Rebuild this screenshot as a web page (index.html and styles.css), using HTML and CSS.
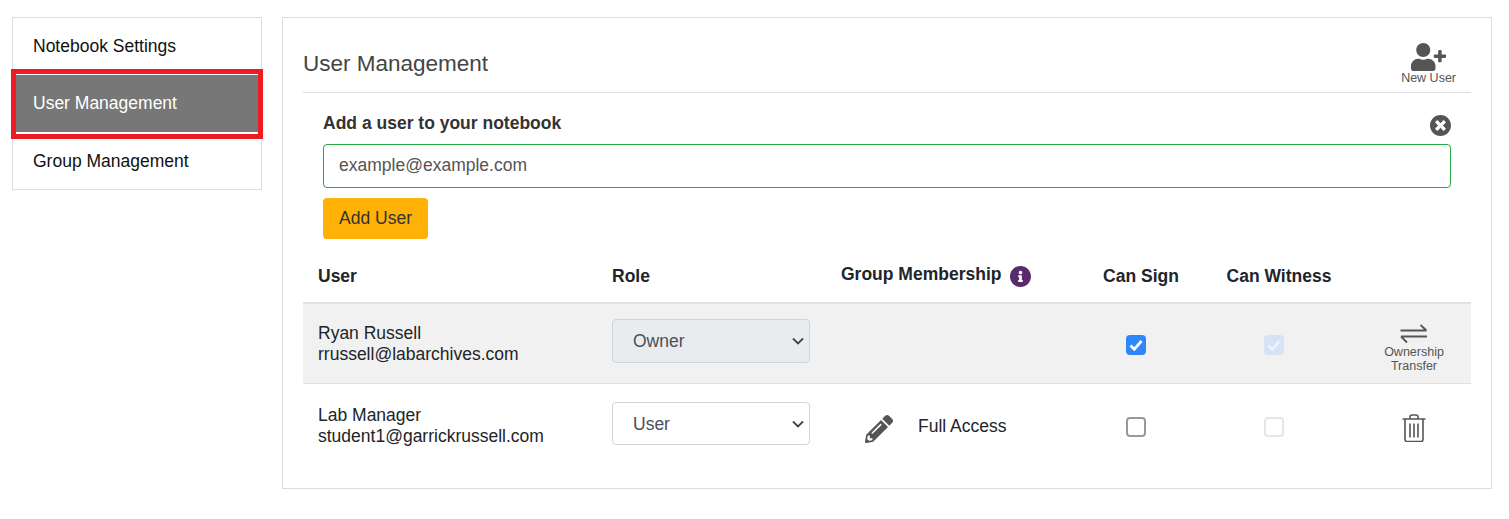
FILE: index.html
```html
<!DOCTYPE html>
<html lang="en">
<head>
<meta charset="utf-8">
<title>User Management</title>
<link rel="stylesheet" href="styles.css">
</head>
<body>
<div class="page">
  <nav class="side">
    <a class="side-item first">Notebook Settings</a>
    <a class="side-item active">User Management</a>
    <a class="side-item last">Group Management</a>
  </nav>
  <main class="main">
    <header class="head">
      <h1 class="title">User Management</h1>
      <div class="new-user">
        <svg class="new-user-icon" viewBox="0 0 640 512"><path d="M624 208h-64v-64c0-8.800-7.200-16-16-16h-32c-8.800 0-16 7.200-16 16v64h-64c-8.800 0-16 7.200-16 16v32c0 8.800 7.200 16 16 16h64v64c0 8.800 7.200 16 16 16h32c8.800 0 16-7.200 16-16v-64h64c8.800 0 16-7.200 16-16v-32c0-8.800-7.200-16-16-16zm-400 48c70.700 0 128-57.300 128-128S294.700 0 224 0 96 57.300 96 128s57.300 128 128 128zm89.600 32h-16.700c-22.200 10.200-46.900 16-72.900 16s-50.600-5.800-72.900-16h-16.700C60.200 288 0 348.200 0 422.400V464c0 26.500 21.500 48 48 48h352c26.500 0 48-21.500 48-48v-41.600c0-74.200-60.200-134.400-134.400-134.400z"/></svg>
        <span class="small-label">New User</span>
      </div>
    </header>
    <section class="add-form">
      <div class="add-top">
        <label class="add-label" for="email">Add a user to your notebook</label>
        <svg class="close-icon" viewBox="8 8 496 496"><path d="M256 8C119 8 8 119 8 256s111 248 248 248 248-111 248-248S393 8 256 8zm121.600 313.100c4.700 4.700 4.700 12.300 0 17L338 377.600c-4.700 4.700-12.300 4.700-17 0L256 312l-65.100 65.600c-4.700 4.700-12.300 4.700-17 0L134.400 338c-4.700-4.700-4.700-12.300 0-17l65.600-65-65.600-65.100c-4.700-4.700-4.700-12.300 0-17l39.600-39.600c4.700-4.700 12.300-4.700 17 0l65 65.700 65.100-65.600c4.700-4.700 12.300-4.700 17 0l39.600 39.600c4.700 4.700 4.700 12.300 0 17L312 256l65.600 65.100z"/></svg>
      </div>
      <input class="email" id="email" type="text" placeholder="example@example.com">
      <button class="add-btn" type="button">Add User</button>
    </section>
    <div class="table">
      <div class="row row-head">
        <div class="cell-user">User</div>
        <div>Role</div>
        <div class="cell-group-head"><span class="group-title">Group Membership</span>
          <svg class="info-icon" viewBox="8 8 496 496"><path d="M256 8C119.043 8 8 119.083 8 256c0 136.997 111.043 248 248 248s248-111.003 248-248C504 119.083 392.957 8 256 8zm0 110c23.196 0 42 18.804 42 42s-18.804 42-42 42-42-18.804-42-42 18.804-42 42-42zm56 254c0 6.627-5.373 12-12 12h-88c-6.627 0-12-5.373-12-12v-24c0-6.627 5.373-12 12-12h12v-64h-12c-6.627 0-12-5.373-12-12v-24c0-6.627 5.373-12 12-12h64c6.627 0 12 5.373 12 12v100h12c6.627 0 12 5.373 12 12v24z"/></svg>
        </div>
        <div class="cell-check head-check">Can Sign</div>
        <div class="cell-check head-check">Can Witness</div>
        <div></div>
      </div>
      <div class="row row-owner">
        <div class="cell-user">Ryan Russell<br>rrussell@labarchives.com</div>
        <div><select class="role role-owner" disabled><option>Owner</option></select></div>
        <div></div>
        <div class="cell-check"><span class="check checked"><svg viewBox="0 0 20 20"><path d="M4.500 10.500l3.800 3.800L15.500 6"/></svg></span></div>
        <div class="cell-check"><span class="check checked-off"><svg viewBox="0 0 20 20"><path d="M4.500 10.500l3.800 3.800L15.500 6"/></svg></span></div>
        <div class="cell-action transfer">
          <svg class="arrows" viewBox="0 0 28 20"><path d="M0.500 6.500h26M20.500 1l6 5.500M27 12.500H1M7 18.500l-6-6"/></svg>
          <span class="small-label">Ownership<br>Transfer</span>
        </div>
      </div>
      <div class="row row-user">
        <div class="cell-user lift">Lab Manager<br>student1@garrickrussell.com</div>
        <div><select class="role role-user"><option>User</option></select></div>
        <div class="cell-access">
          <svg class="pencil" viewBox="0 0 512 512"><path d="M497.900 142.100l-46.100 46.100c-4.700 4.700-12.300 4.700-17 0l-111-111c-4.700-4.700-4.700-12.300 0-17l46.100-46.100c18.700-18.700 49.100-18.700 67.900 0l60.100 60.100c18.800 18.700 18.800 49.100 0 67.900zM284.200 99.800L21.600 362.400.4 483.900c-2.900 16.400 11.400 30.600 27.800 27.800l121.500-21.300 262.600-262.600c4.700-4.700 4.700-12.300 0-17l-111-111c-4.800-4.700-12.400-4.700-17.100 0zM124.100 339.900c-5.500-5.500-5.500-14.300 0-19.800l154-154c5.500-5.500 14.300-5.500 19.800 0s5.500 14.300 0 19.800l-154 154c-5.500 5.500-14.300 5.500-19.800 0zM88 424h48v36.300l-64.500 11.300-31.100-31.100L51.700 376H88v48z"/></svg>
          <span>Full Access</span>
        </div>
        <div class="cell-check"><span class="check empty"></span></div>
        <div class="cell-check"><span class="check empty-off"></span></div>
        <div class="cell-action">
          <svg class="trash" viewBox="0 0 24 28"><path d="M0.500 5h23M8 5V3q0-2 2-2h4q2 0 2 2v2M3 5v20.500q0 2 2 2h14q2 0 2-2V5M8 9.500v14M12 9.500v14M16 9.500v14"/></svg>
        </div>
      </div>
    </div>
  </main>
</div>
</body>
</html>
```
FILE: styles.css
```css
* { box-sizing: border-box; }
html, body { margin: 0; background: #fff; }
body {
  font-family: "Liberation Sans", Arial, sans-serif;
  font-size: 17.5px;
  color: #212529;
}
.page {
  display: flex;
  align-items: flex-start;
  gap: 20px;
  padding: 17px 17px 30px 12px;
}
.side {
  flex: 0 0 250px;
  display: flex;
  flex-direction: column;
  border: 1px solid #ddd;
}
.side-item {
  display: flex;
  align-items: center;
  padding-left: 20px;
  color: #111;
}
.first { height: 56px; }
.last { height: 55px; }
.active {
  height: 60px;
  margin: 0 3px;
  padding-left: 17px;
  background: #777;
  color: #fff;
  border-top: 1px solid #fff;
  border-bottom: 2px solid #fff;
  outline: 5px solid #ed1c24;
}
.main {
  flex: 1;
  border: 1px solid #ddd;
  padding: 24px 20px 18px;
}
.head {
  display: flex;
  justify-content: space-between;
  align-items: flex-end;
  height: 51px;
  padding: 0 15px 7px 0;
  border-bottom: 1px solid #ddd;
}
.title {
  margin: 0 0 8px;
  font-size: 22.500px;
  font-weight: 400;
  line-height: 26px;
  color: #444;
}
.new-user {
  display: flex;
  flex-direction: column;
  align-items: center;
}
.new-user-icon { width: 35px; height: 28px; fill: #555; }
.small-label {
  font-size: 12.500px;
  line-height: 14px;
  color: #555;
  text-align: center;
}
.add-form {
  display: flex;
  flex-direction: column;
  align-items: flex-start;
  padding: 20px 20px 0;
}
.add-top {
  display: flex;
  justify-content: space-between;
  align-items: flex-start;
  width: 100%;
  height: 20px;
}
.add-label { font-weight: 700; line-height: 20px; color: #333; }
.close-icon { width: 21px; height: 21px; margin-top: 2px; fill: #555; }
.email {
  width: 100%;
  height: 44px;
  margin-top: 11px;
  padding: 0 15px 2px;
  border: 1px solid #28a745;
  border-radius: 4px;
  font: inherit;
  color: #495057;
  outline: 0;
}
.email::placeholder { color: #555; opacity: 1; }
.add-btn {
  height: 41px;
  width: 105px;
  margin-top: 10px;
  padding: 0;
  border: 0;
  border-radius: 4px;
  background: #ffb107;
  font: inherit;
  color: #333;
}
.row {
  display: grid;
  grid-template-columns: 309px 228px 224px 144px 132px 131px;
  align-items: center;
}
.row-head {
  height: 65px;
  padding-top: 12px;
  border-bottom: 2px solid #dee2e6;
  font-weight: 700;
}
.row-owner {
  height: 80px;
  background: #f1f1f1;
  border-bottom: 1px solid #dee2e6;
}
.row-user { height: 86px; }
.cell-user { padding-left: 15px; line-height: 21px; }
.lift { margin-bottom: 2px; }
.cell-group-head { display: flex; align-items: center; gap: 9px; padding-left: 1px; }
.group-title { margin-bottom: 4px; }
.info-icon { width: 21px; height: 21px; fill: #5a2a6e; }
.cell-check { display: flex; justify-content: center; }
.head-check { padding-left: 10px; }
.role {
  appearance: none;
  display: block;
  width: 198px;
  height: 44px;
  padding: 0 0 0 20px;
  border: 1px solid #ced4da;
  border-radius: 4px;
  background-color: #fff;
  background-image: url("data:image/svg+xml,%3Csvg xmlns='http://www.w3.org/2000/svg' viewBox='0 0 12 8'%3E%3Cpath d='M1 1.500l5 5 5-5' fill='none' stroke='%23444' stroke-width='1.800'/%3E%3C/svg%3E");
  background-repeat: no-repeat;
  background-position: right 5px center;
  background-size: 12px 8px;
  font: inherit;
  color: #495057;
  opacity: 1;
}
.role-owner { margin-bottom: 5px; background-color: #e9ecef; }
.role-user { height: 43px; margin-bottom: 7px; }
.cell-access { display: flex; align-items: center; gap: 25px; padding-left: 25px; }
.cell-access span { margin-top: -2px; }
.pencil { width: 28px; height: 28px; fill: #555; margin-top: 4px; }
.check {
  display: block;
  width: 20px;
  height: 20px;
  margin-top: 3px;
  border-radius: 4px;
}
.check svg {
  display: block;
  width: 20px;
  height: 20px;
  fill: none;
  stroke-width: 2.800;
  stroke: #fff;
}
.row-user .check { margin-top: 0; }
.checked { background: #2f88fb; }
.checked-off { background: #d6e3f5; }
.checked-off svg { stroke: #eef3fa; }
.empty { border: 2px solid #999; background: #fff; }
.empty-off { border: 2px solid #e6e6e6; background: #fff; }
.cell-action {
  display: flex;
  flex-direction: column;
  align-items: center;
  padding-left: 17px;
}
.transfer { margin-top: 10px; }
.arrows {
  width: 28px;
  height: 20px;
  margin-bottom: 1px;
  fill: none;
  stroke: #555;
  stroke-width: 1.800;
}
.trash {
  width: 24px;
  height: 28px;
  margin-top: 2px;
  fill: none;
  stroke: #555;
  stroke-width: 1.600;
}
```
